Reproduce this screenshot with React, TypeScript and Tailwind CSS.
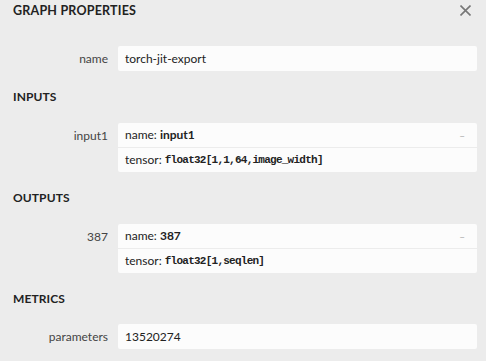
import type { ReactNode } from "react"

const sans = "font-['Lato','Liberation_Sans',sans-serif]"
const mono = "font-['Liberation_Mono','DejaVu_Sans_Mono',monospace] text-[11px] tracking-[-0.75px] font-bold text-[#222]"

function Row({ label, children }: { label: string; children: ReactNode }) {
  return (
    <div className="flex items-start">
      <div className="w-[108px] shrink-0 text-right text-[12px] leading-[25px] text-[#444]">{label}</div>
      <div className="ml-[10px] mr-[9px] flex-1 overflow-hidden rounded-[2px] bg-[#fcfcfc]">{children}</div>
    </div>
  )
}

function Section({ title }: { title: string }) {
  return (
    <div className="flex h-[52px] items-center px-[13px] text-[12px] font-bold tracking-[0.1px] text-[#222]">{title}</div>
  )
}

function Argument({ name, type }: { name: string; type: string }) {
  return (
    <div>
      <div className="flex h-[24px] items-center justify-between pl-[7px] pr-[12px] text-[12px] text-[#222]">
        <span>
          name: <b className="font-bold">{name}</b>
        </span>
        <span className="text-[10px] text-[#aaa]">–</span>
      </div>
      <div className="h-px bg-[#ececec]" />
      <div className="flex h-[24px] items-center pl-[7px] text-[12px] text-[#222]">
        tensor:&nbsp;<span className={mono}>{type}</span>
      </div>
    </div>
  )
}

export default function App() {
  return (
    <div className={`h-[361px] w-[486px] overflow-hidden bg-[#ececec] ${sans}`}>
      {/* header */}
      <div className="flex h-[23px] items-center justify-between pl-[13px] pr-[15px]">
        <span className="text-[12.5px] font-bold tracking-[0.2px] text-[#222]">GRAPH PROPERTIES</span>
        <svg width="11" height="11" viewBox="0 0 11 11" className="mb-[2px]">
          <path d="M0.5 0.5 L10.5 10.5 M10.5 0.5 L0.5 10.5" stroke="#777" strokeWidth="1.6" />
        </svg>
      </div>

      <div className="mt-[23px]">
        <Row label="name">
          <div className="h-[25px] pl-[7px] text-[12px] leading-[25px] text-[#222]">torch-jit-export</div>
        </Row>
      </div>

      <Section title="INPUTS" />
      <Row label="input1">
        <Argument name="input1" type="float32[1,1,64,image_width]" />
      </Row>

      <Section title="OUTPUTS" />
      <Row label="387">
        <Argument name="387" type="float32[1,seqlen]" />
      </Row>

      <div className="flex h-[51px] items-center px-[13px] text-[12px] font-bold tracking-[0.1px] text-[#222]">METRICS</div>
      <Row label="parameters">
        <div className="h-[25px] pl-[7px] text-[12px] leading-[25px] text-[#222]">13520274</div>
      </Row>
    </div>
  )
}
